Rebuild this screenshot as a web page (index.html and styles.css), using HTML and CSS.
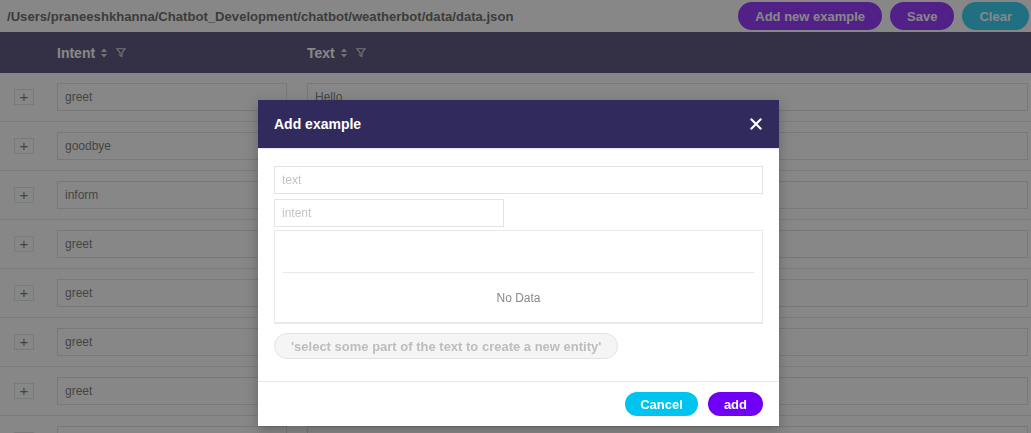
FILE: index.html
```html
<!DOCTYPE html>
<html>
<head>
<meta charset="utf-8">
<link rel="stylesheet" href="styles.css">
</head>
<body>
<div class="page">
  <div class="topbar">
    <div class="path">/Users/praneeshkhanna/Chatbot_Development/chatbot/weatherbot/data/data.json</div>
    <div class="actions">
      <button class="btn btn-purple">Add new example</button>
      <button class="btn btn-purple">Save</button>
      <button class="btn btn-cyan">Clear</button>
    </div>
  </div>
  <div class="table">
    <div class="thead">
      <div></div>
      <div class="th">Intent
        <svg class="sort" width="6" height="10" viewBox="0 0 6 10"><path d="M0 4 L3 0.5 L6 4 Z M0 6 L3 9.5 L6 6 Z" fill="#cfcfd8"/></svg>
        <svg class="filter" width="10" height="9" viewBox="0 0 10 9"><path d="M0.7 0.7 H9.3 L6 4.6 V8.4 L4 7.4 V4.6 Z" fill="none" stroke="#cfcfd8" stroke-width="1.1" stroke-linejoin="round"/></svg>
      </div>
      <div class="th">Text
        <svg class="sort" width="6" height="10" viewBox="0 0 6 10"><path d="M0 4 L3 0.5 L6 4 Z M0 6 L3 9.5 L6 6 Z" fill="#cfcfd8"/></svg>
        <svg class="filter" width="10" height="9" viewBox="0 0 10 9"><path d="M0.7 0.7 H9.3 L6 4.6 V8.4 L4 7.4 V4.6 Z" fill="none" stroke="#cfcfd8" stroke-width="1.1" stroke-linejoin="round"/></svg>
      </div>
    </div>
    <div class="row"><div class="cell-exp"><span class="exp">+</span></div><div class="field intent">greet</div><div class="field text">Hello</div></div>
    <div class="row"><div class="cell-exp"><span class="exp">+</span></div><div class="field intent">goodbye</div><div class="field text"></div></div>
    <div class="row"><div class="cell-exp"><span class="exp">+</span></div><div class="field intent">inform</div><div class="field text"></div></div>
    <div class="row"><div class="cell-exp"><span class="exp">+</span></div><div class="field intent">greet</div><div class="field text"></div></div>
    <div class="row"><div class="cell-exp"><span class="exp">+</span></div><div class="field intent">greet</div><div class="field text"></div></div>
    <div class="row"><div class="cell-exp"><span class="exp">+</span></div><div class="field intent">greet</div><div class="field text"></div></div>
    <div class="row"><div class="cell-exp"><span class="exp">+</span></div><div class="field intent">greet</div><div class="field text"></div></div>
    <div class="row"><div class="cell-exp"><span class="exp"></span></div><div class="field intent"></div><div class="field text"></div></div>
  </div>
</div>
<div class="mask"></div>
<div class="modal">
  <div class="modal-header">
    <span class="modal-title">Add example</span>
    <svg class="close" width="12" height="12" viewBox="0 0 12 12"><path d="M1.5 1.5 L10.5 10.5 M10.5 1.5 L1.5 10.5" stroke="#fff" stroke-width="2.1" stroke-linecap="square"/></svg>
  </div>
  <div class="modal-body">
    <div class="input wide placeholder">text</div>
    <div class="input narrow placeholder">intent</div>
    <div class="entities">
      <div class="entities-head"></div>
      <div class="nodata">No Data</div>
    </div>
    <button class="hint">'select some part of the text to create a new entity'</button>
  </div>
  <div class="modal-footer">
    <button class="fbtn cancel">Cancel</button>
    <button class="fbtn add">add</button>
  </div>
</div>
</body>
</html>
```
FILE: styles.css
```css
html, body {
  margin: 0;
  padding: 0;
  height: 433px;
  overflow: hidden;
  background: #fff;
  font-family: "Liberation Sans", Arial, Helvetica, sans-serif;
}
.page {
  width: 1031px;
}
.topbar {
  height: 32px;
  display: flex;
  align-items: center;
  justify-content: space-between;
  padding: 0 2px 0 7px;
}
.path {
  font-size: 13.1px;
  font-weight: bold;
  color: #444;
}
.actions {
  display: flex;
  gap: 8px;
}
.btn {
  height: 28px;
  border: none;
  border-radius: 14px;
  padding: 0 17px;
  font-family: inherit;
  font-size: 13px;
  font-weight: bold;
  color: #fff;
}
.btn-purple { background: #7a00ff; }
.btn-cyan { background: #00c6f2; }
.table {
  padding-right: 3px;
}
.thead {
  display: grid;
  grid-template-columns: 57px 250px 1fr;
  height: 41px;
  align-items: center;
  background: #312a5c;
  margin-right: -3px;
}
.th {
  display: flex;
  align-items: center;
  color: #fff;
  font-size: 14px;
  font-weight: bold;
}
.th .sort { margin-left: 6px; }
.th .filter { margin-left: 9px; }
.row {
  display: grid;
  grid-template-columns: 57px 250px 1fr;
  height: 48px;
  align-items: center;
  border-bottom: 1px solid #e2e2e2;
  margin-right: -3px;
  padding-right: 3px;
}
.cell-exp {
  padding-left: 14px;
}
.exp {
  display: flex;
  align-items: center;
  justify-content: center;
  width: 18px;
  height: 14px;
  border: 1px solid #dcdcdc;
  font-size: 15px;
  line-height: 14px;
  color: #555;
}
.field {
  box-sizing: border-box;
  height: 28px;
  border: 1px solid #d9d9d9;
  padding: 0 7px;
  display: flex;
  align-items: center;
  font-size: 12px;
  color: #595959;
}
.field.intent { width: 230px; }
.field.text { width: 100%; }
.mask {
  position: fixed;
  inset: 0;
  background: rgba(55, 55, 55, 0.6);
}
.modal {
  position: absolute;
  top: 100px;
  left: 258px;
  width: 521px;
  background: #fff;
  box-shadow: 0 4px 12px rgba(0, 0, 0, 0.25);
}
.modal-header {
  height: 48px;
  background: #312a5c;
  border-bottom: 1px solid #e8e6f2;
  display: flex;
  align-items: center;
  justify-content: space-between;
  padding: 0 17px 0 16px;
}
.modal-title {
  color: #fff;
  font-size: 14px;
  font-weight: bold;
}
.close { margin-top: -1px; }
.modal-body {
  padding: 17px 16px 22px;
  display: flex;
  flex-direction: column;
  align-items: flex-start;
}
.input {
  box-sizing: border-box;
  height: 28px;
  border: 1px solid #e4e4e4;
  padding: 0 7px;
  display: flex;
  align-items: center;
  font-size: 12px;
}
.placeholder { color: #c4c4c4; }
.input.wide { width: 100%; }
.input.narrow { width: 230px; margin-top: 5px; }
.entities {
  box-sizing: border-box;
  width: 100%;
  height: 94px;
  margin-top: 3px;
  border: 1px solid #e9e9e9;
  border-bottom-width: 2px;
  padding: 0 8px;
}
.entities-head {
  height: 41px;
  border-bottom: 1px solid #e9e9e9;
}
.nodata {
  height: 49px;
  display: flex;
  align-items: center;
  justify-content: center;
  font-size: 12px;
  color: #8a8a8a;
}
.hint {
  margin-top: 9px;
  height: 26px;
  border: 1px solid #e3e3e3;
  background: #f5f5f5;
  border-radius: 13px;
  padding: 0 16px;
  font-family: inherit;
  font-size: 13px;
  font-weight: bold;
  color: #bdbdbd;
}
.modal-footer {
  border-top: 1px solid #e9e9e9;
  display: flex;
  justify-content: flex-end;
  gap: 10px;
  padding: 10px 16px 10px;
}
.fbtn {
  height: 24px;
  border: none;
  border-radius: 12px;
  padding: 0 15px;
  font-family: inherit;
  font-size: 13px;
  font-weight: bold;
  color: #fff;
}
.fbtn.cancel { background: #00c4f0; padding: 0 15px; }
.fbtn.add { background: #6f00f5; padding: 0 16px; }
```
